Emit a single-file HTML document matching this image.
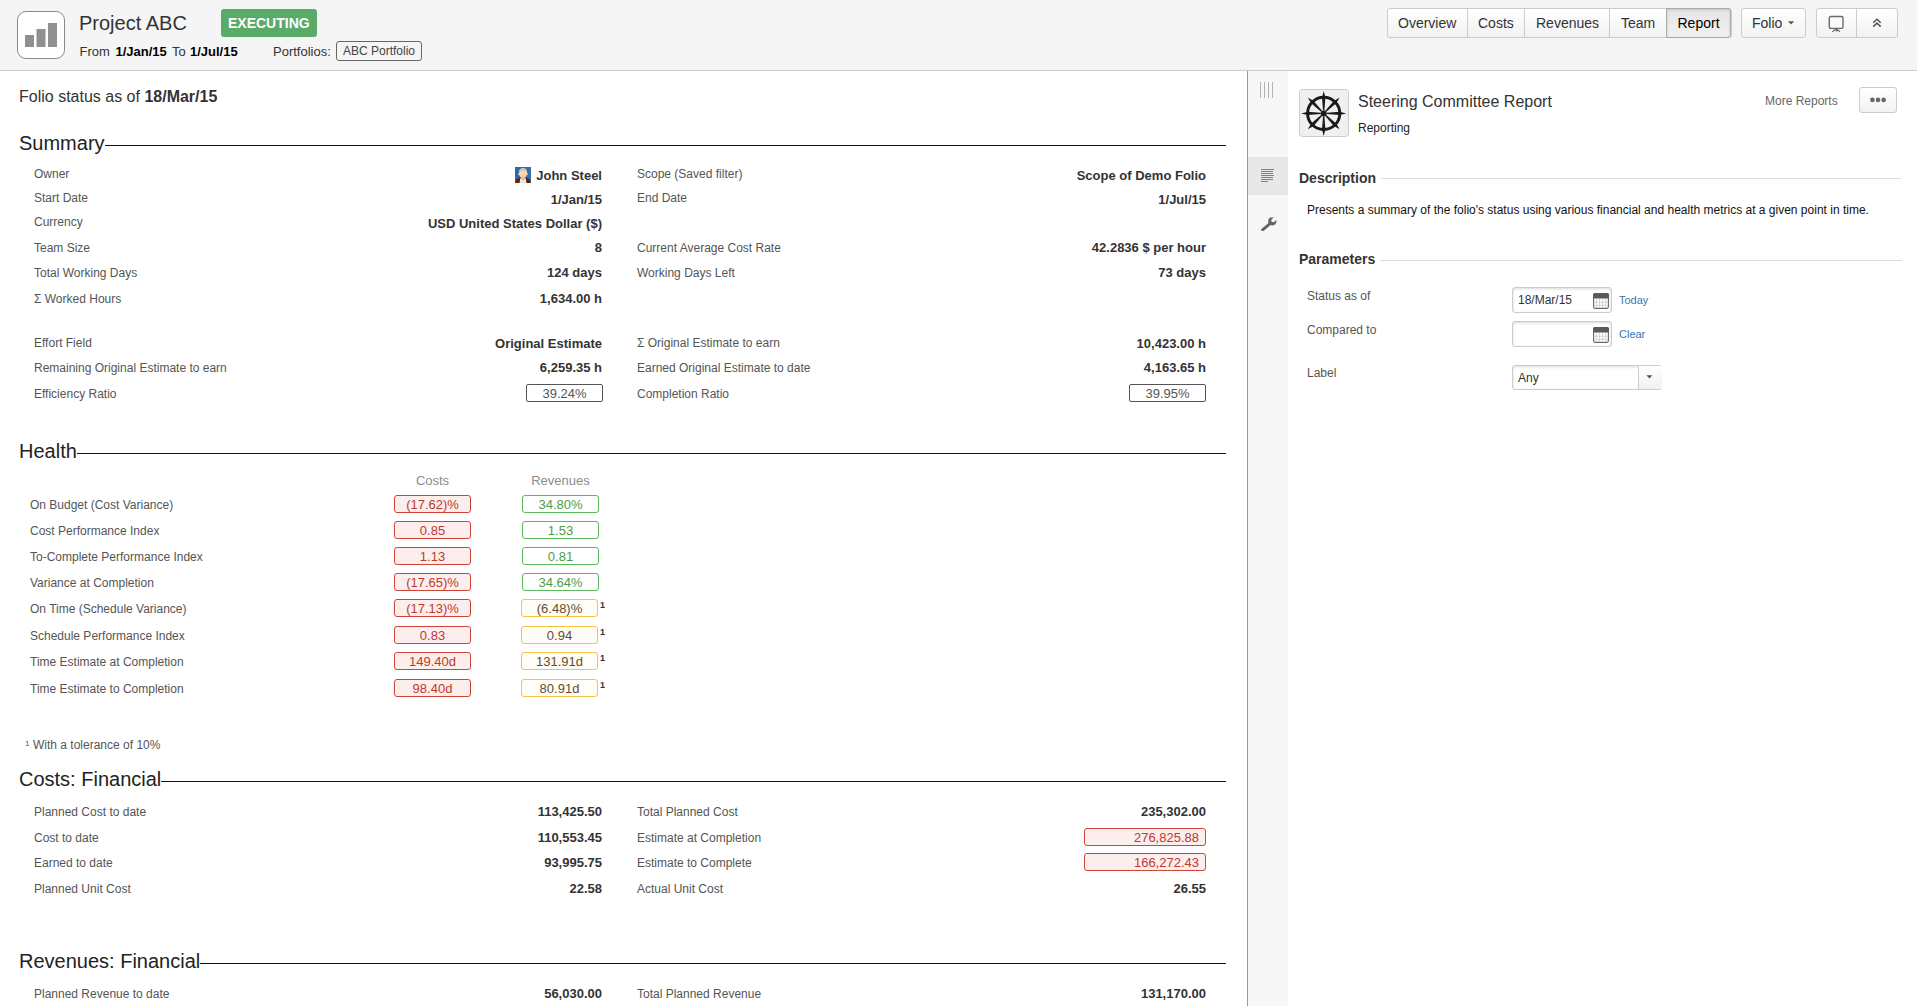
<!DOCTYPE html>
<html><head><meta charset="utf-8">
<style>
html,body{margin:0;padding:0;background:#fff;}
body{width:1917px;height:1006px;overflow:hidden;position:relative;font-family:"Liberation Sans",sans-serif;color:#333;}
.a{position:absolute;white-space:nowrap;line-height:20px;}
.r{text-align:right;}
.hdr{position:absolute;left:0;top:0;width:1917px;height:70px;background:#f5f5f5;border-bottom:1px solid #ccc;}
.lbl{font-size:12px;color:#555;}
.val{font-size:13px;font-weight:bold;color:#333;}
.sec{font-size:20px;color:#222;}
.line{position:absolute;height:1px;background:#111;}
.btn{position:absolute;top:8px;height:28px;border:1px solid #ccc;background:linear-gradient(#fff,#f2f2f2);box-sizing:content-box;}
.bt{position:absolute;top:5px;font-size:14px;line-height:20px;color:#333;white-space:nowrap;}
.box{position:absolute;box-sizing:border-box;border:1px solid;border-radius:3px;font-size:13px;line-height:16px;padding-top:1px;text-align:center;}
.red{border-color:#d04437;background:#fbeeed;color:#c0392b;}
.grn{border-color:#5cb85c;background:#fff;color:#4a9e4a;}
.yel{border-color:#f5c342;background:#fffdf6;color:#654d2b;}
.sup{position:absolute;font-size:9px;font-weight:bold;line-height:10px;color:#333;}
</style></head><body>

<!-- HEADER -->
<div class="hdr"></div>
<svg style="position:absolute;left:16px;top:10px" width="50" height="50" viewBox="0 0 50 50">
 <rect x="1.5" y="1.5" width="47" height="47" rx="8.5" ry="8.5" fill="#fff" stroke="#8a8a8a" stroke-width="1"/>
 <rect x="9" y="25" width="9" height="12" fill="#909090"/>
 <rect x="20.5" y="19" width="9" height="18" fill="#909090"/>
 <rect x="32" y="13" width="9" height="24" fill="#909090"/>
</svg>
<div class="a" style="left:79px;top:13px;font-size:20px;color:#333">Project ABC</div>
<div style="position:absolute;left:221px;top:9px;width:96px;height:28px;background:#5aab6a;border-radius:3px"></div>
<div class="a" style="left:228px;top:12.5px;font-size:14px;font-weight:bold;color:#fff">EXECUTING</div>
<div class="a" style="left:79.5px;top:42px;font-size:13px">From</div>
<div class="a" style="left:115.5px;top:42px;font-size:13px;font-weight:bold;color:#000">1/Jan/15</div>
<div class="a" style="left:172px;top:42px;font-size:13px">To</div>
<div class="a" style="left:190px;top:42px;font-size:13px;font-weight:bold;color:#000">1/Jul/15</div>
<div class="a" style="left:273px;top:42px;font-size:13px">Portfolios:</div>
<div style="position:absolute;left:336px;top:41px;width:86px;height:20px;box-sizing:border-box;border:1px solid #666;border-radius:3px;background:#f5f5f5"></div>
<div class="a" style="left:343px;top:41px;font-size:12px;color:#444">ABC Portfolio</div>

<!-- nav buttons -->
<div class="btn" style="left:1387px;width:343px;border-radius:3px"></div>
<div style="position:absolute;left:1666px;top:8px;width:65px;height:30px;box-sizing:border-box;border:1px solid #aaa;border-radius:0 3px 3px 0;background:linear-gradient(#e6e6e6,#f0f0f0);box-shadow:inset 0 1px 3px rgba(0,0,0,.15)"></div>
<div style="position:absolute;left:1467px;top:9px;width:1px;height:28px;background:#ccc"></div>
<div style="position:absolute;left:1524px;top:9px;width:1px;height:28px;background:#ccc"></div>
<div style="position:absolute;left:1609px;top:9px;width:1px;height:28px;background:#ccc"></div>
<div class="bt" style="left:1398px;top:13px">Overview</div>
<div class="bt" style="left:1478px;top:13px">Costs</div>
<div class="bt" style="left:1536px;top:13px">Revenues</div>
<div class="bt" style="left:1621px;top:13px">Team</div>
<div class="bt" style="left:1677.5px;top:13px;color:#000">Report</div>
<div class="btn" style="left:1741px;width:63px;border-radius:3px"></div>
<div class="bt" style="left:1752px;top:13px">Folio</div>
<svg style="position:absolute;left:1788px;top:21px" width="7" height="4"><path d="M0 0.3H6.2L3.1 3.6Z" fill="#555"/></svg>
<div class="btn" style="left:1816px;width:80px;border-radius:3px"></div>
<div style="position:absolute;left:1856px;top:9px;width:1px;height:28px;background:#ccc"></div>
<svg style="position:absolute;left:1828px;top:15px" width="17" height="18" viewBox="0 0 17 18">
 <rect x="1.26" y="1.55" width="13.74" height="11.8" rx="1.5" fill="#fafafa" stroke="#6b6b6b" stroke-width="1.4"/>
 <path d="M8.2 13.5L8.2 16.6M8.2 13.8L4.3 16.8M8.2 13.8L12 16.8" stroke="#6b6b6b" stroke-width="1.2" fill="none"/>
</svg>
<svg style="position:absolute;left:1872px;top:17px" width="10" height="11" viewBox="0 0 10 11">
 <path d="M1.2 5.8L4.95 2.3L8.7 5.8M1.2 9.6L4.95 6.1L8.7 9.6" stroke="#555" stroke-width="1.5" fill="none"/>
</svg>

<!-- LEFT CONTENT -->
<div class="a" style="left:19px;top:87px;font-size:16px;color:#333">Folio status as of <b>18/Mar/15</b></div>

<div class="a sec" style="left:19px;top:133px">Summary</div>
<div class="line" style="left:105px;top:145px;width:1121px"></div>

<div class="a lbl" style="left:34px;top:164px">Owner</div>
<svg style="position:absolute;left:515px;top:167px" width="16" height="16" viewBox="0 0 16 16">
 <rect width="16" height="16" fill="#2c69b0"/>
 <rect x="10" y="0" width="6" height="16" fill="#3574b8" opacity="0.5"/>
 <path d="M0.3 16L1 12.6L5 10.6L8 12.5L11 10.6L15 12.6L15.7 16Z" fill="#5e2208"/>
 <path d="M4.6 16L5.2 11.2L8 12.6L10.8 11.2L11.4 16Z" fill="#e6e6e6"/>
 <path d="M6 10L10 10L10.2 11.6L8 12.6L5.8 11.6Z" fill="#f4b47a"/>
 <ellipse cx="3.9" cy="6.9" rx="0.8" ry="1.1" fill="#f6c48f"/>
 <ellipse cx="12.1" cy="6.9" rx="0.8" ry="1.1" fill="#f6c48f"/>
 <path d="M4.1 5C4.1 2.6 6 1.6 8 1.6C10 1.6 11.9 2.6 11.9 5L11.8 8C11.6 9.6 9.8 10.6 8 10.6C6.2 10.6 4.4 9.6 4.2 8Z" fill="#fcdaa9"/>
 <path d="M4 5.2C3.8 2.4 5.8 1 8 1C10.2 1 12.2 2.4 12 5.2C11.6 4.2 10.4 3.8 8 3.8C5.6 3.8 4.4 4.2 4 5.2Z" fill="#c6c6c6"/>
 <path d="M6.6 8.7C7.4 8.3 8.6 8.3 9.4 8.7L9 9.6C8.4 9.9 7.6 9.9 7 9.6Z" fill="#bdbdbd"/>
</svg>
<div class="a val" style="right:1315px;top:166px">John Steel</div>
<div class="a lbl" style="left:34px;top:188px">Start Date</div>
<div class="a val" style="right:1315px;top:190px">1/Jan/15</div>
<div class="a lbl" style="left:34px;top:212px">Currency</div>
<div class="a val" style="right:1315px;top:214px">USD United States Dollar ($)</div>
<div class="a lbl" style="left:34px;top:238px">Team Size</div>
<div class="a val" style="right:1315px;top:238px">8</div>
<div class="a lbl" style="left:34px;top:263px">Total Working Days</div>
<div class="a val" style="right:1315px;top:263px">124 days</div>
<div class="a lbl" style="left:34px;top:289px">Σ Worked Hours</div>
<div class="a val" style="right:1315px;top:289px">1,634.00 h</div>
<div class="a lbl" style="left:34px;top:333px">Effort Field</div>
<div class="a val" style="right:1315px;top:334px">Original Estimate</div>
<div class="a lbl" style="left:34px;top:358px">Remaining Original Estimate to earn</div>
<div class="a val" style="right:1315px;top:358px">6,259.35 h</div>
<div class="a lbl" style="left:34px;top:384px">Efficiency Ratio</div>
<div class="box" style="left:526px;top:384px;width:77px;height:18px;border-color:#555;border-radius:2px;color:#555;line-height:16px">39.24%</div>

<div class="a lbl" style="left:637px;top:164px">Scope (Saved filter)</div>
<div class="a val" style="right:711px;top:166px">Scope of Demo Folio</div>
<div class="a lbl" style="left:637px;top:188px">End Date</div>
<div class="a val" style="right:711px;top:190px">1/Jul/15</div>
<div class="a lbl" style="left:637px;top:238px">Current Average Cost Rate</div>
<div class="a val" style="right:711px;top:238px">42.2836 $ per hour</div>
<div class="a lbl" style="left:637px;top:263px">Working Days Left</div>
<div class="a val" style="right:711px;top:263px">73 days</div>
<div class="a lbl" style="left:637px;top:333px">Σ Original Estimate to earn</div>
<div class="a val" style="right:711px;top:334px">10,423.00 h</div>
<div class="a lbl" style="left:637px;top:358px">Earned Original Estimate to date</div>
<div class="a val" style="right:711px;top:358px">4,163.65 h</div>
<div class="a lbl" style="left:637px;top:384px">Completion Ratio</div>
<div class="box" style="left:1129px;top:384px;width:77px;height:18px;border-color:#555;border-radius:2px;color:#555;line-height:16px">39.95%</div>

<!-- HEALTH -->
<div class="a sec" style="left:19px;top:441px">Health</div>
<div class="line" style="left:77px;top:453px;width:1149px"></div>
<div class="a" style="left:394px;width:77px;text-align:center;top:471px;font-size:13px;color:#8c8c8c">Costs</div>
<div class="a" style="left:522px;width:77px;text-align:center;top:471px;font-size:13px;color:#8c8c8c">Revenues</div>

<div class="a lbl" style="left:30px;top:495px">On Budget (Cost Variance)</div>
<div class="a lbl" style="left:30px;top:521px">Cost Performance Index</div>
<div class="a lbl" style="left:30px;top:547px">To-Complete Performance Index</div>
<div class="a lbl" style="left:30px;top:573px">Variance at Completion</div>
<div class="a lbl" style="left:30px;top:599px">On Time (Schedule Variance)</div>
<div class="a lbl" style="left:30px;top:626px">Schedule Performance Index</div>
<div class="a lbl" style="left:30px;top:652px">Time Estimate at Completion</div>
<div class="a lbl" style="left:30px;top:679px">Time Estimate to Completion</div>

<div class="box red" style="left:394px;top:495px;width:77px;height:18px">(17.62)%</div>
<div class="box red" style="left:394px;top:521px;width:77px;height:18px">0.85</div>
<div class="box red" style="left:394px;top:547px;width:77px;height:18px">1.13</div>
<div class="box red" style="left:394px;top:573px;width:77px;height:18px">(17.65)%</div>
<div class="box red" style="left:394px;top:599px;width:77px;height:18px">(17.13)%</div>
<div class="box red" style="left:394px;top:626px;width:77px;height:18px">0.83</div>
<div class="box red" style="left:394px;top:652px;width:77px;height:18px">149.40d</div>
<div class="box red" style="left:394px;top:679px;width:77px;height:18px">98.40d</div>

<div class="box grn" style="left:522px;top:495px;width:77px;height:18px">34.80%</div>
<div class="box grn" style="left:522px;top:521px;width:77px;height:18px">1.53</div>
<div class="box grn" style="left:522px;top:547px;width:77px;height:18px">0.81</div>
<div class="box grn" style="left:522px;top:573px;width:77px;height:18px">34.64%</div>
<div class="box yel" style="left:521px;top:599px;width:77px;height:18px">(6.48)%</div>
<div class="box yel" style="left:521px;top:626px;width:77px;height:18px">0.94</div>
<div class="box yel" style="left:521px;top:652px;width:77px;height:18px">131.91d</div>
<div class="box yel" style="left:521px;top:679px;width:77px;height:18px">80.91d</div>
<div class="sup" style="left:600px;top:600px">1</div>
<div class="sup" style="left:600px;top:627px">1</div>
<div class="sup" style="left:600px;top:653px">1</div>
<div class="sup" style="left:600px;top:680px">1</div>

<div class="a" style="left:25px;top:740px;font-size:8px;line-height:8px;color:#555">1</div>
<div class="a lbl" style="left:33px;top:735px">With a tolerance of 10%</div>

<!-- COSTS FINANCIAL -->
<div class="a sec" style="left:19px;top:769px">Costs: Financial</div>
<div class="line" style="left:161px;top:781px;width:1065px"></div>
<div class="a lbl" style="left:34px;top:802px">Planned Cost to date</div>
<div class="a val" style="right:1315px;top:802px">113,425.50</div>
<div class="a lbl" style="left:34px;top:828px">Cost to date</div>
<div class="a val" style="right:1315px;top:828px">110,553.45</div>
<div class="a lbl" style="left:34px;top:853px">Earned to date</div>
<div class="a val" style="right:1315px;top:853px">93,995.75</div>
<div class="a lbl" style="left:34px;top:879px">Planned Unit Cost</div>
<div class="a val" style="right:1315px;top:879px">22.58</div>

<div class="a lbl" style="left:637px;top:802px">Total Planned Cost</div>
<div class="a val" style="right:711px;top:802px">235,302.00</div>
<div class="a lbl" style="left:637px;top:828px">Estimate at Completion</div>
<div class="box red" style="left:1084px;top:828px;width:122px;height:18px;text-align:right;padding-right:6px">276,825.88</div>
<div class="a lbl" style="left:637px;top:853px">Estimate to Complete</div>
<div class="box red" style="left:1084px;top:853px;width:122px;height:18px;text-align:right;padding-right:6px">166,272.43</div>
<div class="a lbl" style="left:637px;top:879px">Actual Unit Cost</div>
<div class="a val" style="right:711px;top:879px">26.55</div>

<!-- REVENUES FINANCIAL -->
<div class="a sec" style="left:19px;top:951px">Revenues: Financial</div>
<div class="line" style="left:200px;top:963px;width:1026px"></div>
<div class="a lbl" style="left:34px;top:984px">Planned Revenue to date</div>
<div class="a val" style="right:1315px;top:984px">56,030.00</div>
<div class="a lbl" style="left:637px;top:984px">Total Planned Revenue</div>
<div class="a val" style="right:711px;top:984px">131,170.00</div>

<!-- RIGHT PANEL -->
<div style="position:absolute;left:1247px;top:71px;width:1px;height:935px;background:#999"></div>
<div style="position:absolute;left:1248px;top:71px;width:40px;height:935px;background:#f7f7f7"></div>
<div style="position:absolute;left:1248px;top:157px;width:40px;height:38px;background:#e8e8e8"></div>
<svg style="position:absolute;left:1258px;top:80px" width="20" height="20">
 <path d="M2.5 2V18M6.5 2V18M10.5 2V18M14.5 2V18" stroke="#b3b3b3" stroke-width="1"/>
</svg>
<svg style="position:absolute;left:1260px;top:168px" width="16" height="16">
 <path d="M1 1.5H14M1 3.5H13M1 5.5H13M1 7.5H14M1 9.5H13M1 11.5H13M1 13.5H8" stroke="#808080" stroke-width="1"/>
</svg>
<svg style="position:absolute;left:1254.5px;top:210.4px" width="28" height="28" viewBox="0 0 28 28">
 <defs><mask id="wm"><rect width="28" height="28" fill="#fff"/><circle cx="18.0" cy="10.6" r="1.7" fill="#000"/><path d="M16.8 9.4L19.6 6.0L22.6 9.0L19.2 11.8Z" fill="#000"/></mask></defs>
 <g fill="#666" mask="url(#wm)">
  <path d="M7.6 19.9L15.6 13.1" stroke="#666" stroke-width="2.9" stroke-linecap="round"/>
  <circle cx="17.3" cy="11.3" r="4.1"/>
 </g>
</svg>

<svg style="position:absolute;left:1299px;top:89px" width="50" height="48" viewBox="0 0 50 48">
 <rect x="0.5" y="0.5" width="49" height="47" rx="3" fill="#f0f0f0" stroke="#ccc"/>
 <g transform="translate(24.7 24.4)" fill="#1a1a1a">
  <circle r="16.1" fill="none" stroke="#1a1a1a" stroke-width="2.9"/>
  <circle r="3"/>
  <g id="sp"><path d="M0 -22.5L1.7 -16L0.7 -3L-0.7 -3L-1.7 -16Z"/></g>
  <use href="#sp" transform="rotate(45)"/>
  <use href="#sp" transform="rotate(90)"/>
  <use href="#sp" transform="rotate(135)"/>
  <use href="#sp" transform="rotate(180)"/>
  <use href="#sp" transform="rotate(225)"/>
  <use href="#sp" transform="rotate(270)"/>
  <use href="#sp" transform="rotate(315)"/>
 </g>
</svg>
<div class="a" style="left:1358px;top:92px;font-size:16px;color:#333">Steering Committee Report</div>
<div class="a" style="left:1358px;top:118px;font-size:12px;color:#222">Reporting</div>
<div class="a" style="left:1765px;top:91px;font-size:12px;color:#666">More Reports</div>
<div style="position:absolute;left:1859px;top:87px;width:38px;height:26px;box-sizing:border-box;border:1px solid #ccc;border-radius:3px;background:linear-gradient(#fff,#f2f2f2)"></div>
<svg style="position:absolute;left:1868px;top:97px" width="20" height="6"><circle cx="4.4" cy="2.9" r="2.3" fill="#666"/><circle cx="10" cy="2.9" r="2.3" fill="#666"/><circle cx="15.6" cy="2.9" r="2.3" fill="#666"/></svg>

<div class="a" style="left:1299px;top:168px;font-size:14px;font-weight:bold;color:#333">Description</div>
<div style="position:absolute;left:1381px;top:178px;width:520px;height:1px;background:#ddd"></div>
<div class="a" style="left:1307px;top:200px;font-size:12px;color:#111">Presents a summary of the folio's status using various financial and health metrics at a given point in time.</div>

<div class="a" style="left:1299px;top:249px;font-size:14px;font-weight:bold;color:#333">Parameters</div>
<div style="position:absolute;left:1380px;top:260px;width:522px;height:1px;background:#ddd"></div>
<div class="a lbl" style="left:1307px;top:286px">Status as of</div>
<div class="a lbl" style="left:1307px;top:320px">Compared to</div>
<div class="a lbl" style="left:1307px;top:363px">Label</div>

<div style="position:absolute;left:1512px;top:287px;width:100px;height:26px;box-sizing:border-box;border:1px solid #ccc;border-radius:3px;background:#fff;box-shadow:inset 0 1px 3px rgba(0,0,0,.15)"></div>
<div class="a" style="left:1518px;top:290px;font-size:12px;color:#333">18/Mar/15</div>
<div style="position:absolute;left:1512px;top:321px;width:100px;height:26px;box-sizing:border-box;border:1px solid #ccc;border-radius:3px;background:#fff;box-shadow:inset 0 1px 3px rgba(0,0,0,.15)"></div>
<svg style="position:absolute;left:1593px;top:293px" width="16" height="16" viewBox="0 0 16 16">
 <rect x="0.6" y="0.6" width="14.8" height="14.8" rx="1.6" fill="#fff" stroke="#666" stroke-width="1.1"/>
 <path d="M3.4 5.5V15M6.5 5.5V15M9.6 5.5V15M12.7 5.5V15M1 9.2H15M1 12.3H15" stroke="#d0d0d0" stroke-width="0.9"/>
 <path d="M0 1.8A1.8 1.8 0 0 1 1.8 0H14.2A1.8 1.8 0 0 1 16 1.8V5.5H0Z" fill="#595959"/>
</svg>
<svg style="position:absolute;left:1593px;top:327px" width="16" height="16" viewBox="0 0 16 16">
 <rect x="0.6" y="0.6" width="14.8" height="14.8" rx="1.6" fill="#fff" stroke="#666" stroke-width="1.1"/>
 <path d="M3.4 5.5V15M6.5 5.5V15M9.6 5.5V15M12.7 5.5V15M1 9.2H15M1 12.3H15" stroke="#d0d0d0" stroke-width="0.9"/>
 <path d="M0 1.8A1.8 1.8 0 0 1 1.8 0H14.2A1.8 1.8 0 0 1 16 1.8V5.5H0Z" fill="#595959"/>
</svg>
<div class="a" style="left:1619px;top:290px;font-size:11px;color:#3b73af">Today</div>
<div class="a" style="left:1619px;top:324px;font-size:11px;color:#3b73af">Clear</div>

<div style="position:absolute;left:1512px;top:365px;width:150px;height:25px;box-sizing:border-box;border:1px solid #ccc;border-radius:3px;background:#fff;box-shadow:inset 0 1px 3px rgba(0,0,0,.15)"></div>
<div style="position:absolute;left:1638px;top:366px;width:23px;height:23px;border-left:1px solid #ccc;background:linear-gradient(#fff,#f2f2f2);border-radius:0 2px 2px 0"></div>
<div class="a" style="left:1518px;top:368px;font-size:12px;color:#333">Any</div>
<svg style="position:absolute;left:1646px;top:375px" width="7" height="4"><path d="M0.4 0.2H6.4L3.4 3.4Z" fill="#555"/></svg>

</body></html>
